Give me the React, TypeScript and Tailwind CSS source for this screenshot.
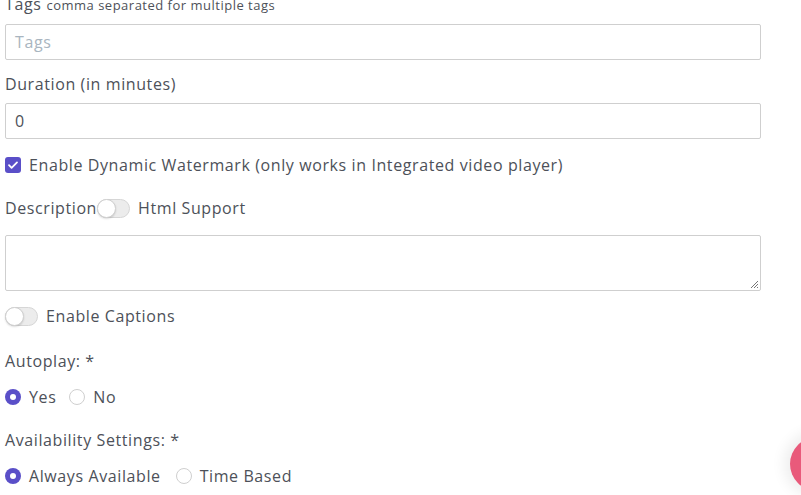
import React from "react";

const font = { fontFamily: '"Open Sans", "Noto Sans", sans-serif' };

function Toggle() {
  return (
    <span className="relative inline-block h-[19px] w-[33px] shrink-0 rounded-full border border-[#d6d6d6] bg-[#ececec]">
      <span className="absolute left-[-1px] top-[-1px] h-[19px] w-[19px] rounded-full border border-[#d0d0d0] bg-white shadow-[0_1px_2px_rgba(0,0,0,0.15)]" />
    </span>
  );
}

function Radio({ checked }: { checked?: boolean }) {
  return checked ? (
    <span className="flex h-[16px] w-[16px] shrink-0 items-center justify-center rounded-full bg-[#5a4fc8]">
      <span className="h-[6px] w-[6px] rounded-full bg-white" />
    </span>
  ) : (
    <span className="block h-[16px] w-[16px] shrink-0 rounded-full border border-[#cfcfcf] bg-white" />
  );
}

export default function App() {
  return (
    <div className="relative h-[495px] w-[801px] overflow-hidden bg-white text-[16px] leading-[24px] tracking-[0.6px] text-[#4d5159]" style={font}>
      <div className="pl-[5px]">
        <div className="mt-[-8px] flex items-baseline gap-[5px]">
          <span>Tags</span>
          <span className="text-[13px] tracking-[0.5px]">comma separated for multiple tags</span>
        </div>
        <div className="mt-[7px] flex h-[36px] w-[756px] items-center rounded-[2px] border border-[#cfcfcf] px-[9px] text-[#a9b5c0]">
          Tags
        </div>
        <div className="mt-[12px]">Duration (in minutes)</div>
        <div className="mt-[7px] flex h-[36px] w-[756px] items-center rounded-[2px] border border-[#cfcfcf] px-[9px]">
          0
        </div>
        <div className="mt-[14px] flex items-center gap-[8px]">
          <span className="flex h-[16px] w-[16px] items-center justify-center rounded-[3px] bg-[#5a4fc8]">
            <svg width="12" height="12" viewBox="0 0 12 12" fill="none">
              <path d="M2 6.2l2.6 2.6L10 3.4" stroke="white" strokeWidth="1.8" strokeLinecap="round" strokeLinejoin="round" />
            </svg>
          </span>
          <span>Enable Dynamic Watermark (only works in Integrated video player)</span>
        </div>
        <div className="mt-[19px] flex items-center">
          <span>Description</span>
          <Toggle />
          <span className="ml-[8px]">Html Support</span>
        </div>
        <div className="relative mt-[15px] h-[56px] w-[756px] rounded-[2px] border border-[#cfcfcf]">
          <svg className="absolute bottom-[1px] right-[1px]" width="9" height="9" viewBox="0 0 9 9">
            <path d="M8 1L1 8M8 4L4 8M8 7L7 8" stroke="#777" strokeWidth="1" />
          </svg>
        </div>
        <div className="mt-[13px] flex items-center gap-[8px]">
          <Toggle />
          <span>Enable Captions</span>
        </div>
        <div className="mt-[21px]">Autoplay: *</div>
        <div className="mt-[12px] flex items-center">
          <Radio checked />
          <span className="ml-[8px]">Yes</span>
          <span className="ml-[13px]"><Radio /></span>
          <span className="ml-[8px]">No</span>
        </div>
        <div className="mt-[19px]">Availability Settings: *</div>
        <div className="mt-[12px] flex items-center">
          <Radio checked />
          <span className="ml-[8px]">Always Available</span>
          <span className="ml-[15px]"><Radio /></span>
          <span className="ml-[8px]">Time Based</span>
        </div>
      </div>
      <div className="absolute left-[790px] top-[437px] h-[54px] w-[54px] rounded-full bg-[#e95a7b] shadow-[0_0_14px_6px_rgba(0,0,0,0.07)]" />
    </div>
  );
}
